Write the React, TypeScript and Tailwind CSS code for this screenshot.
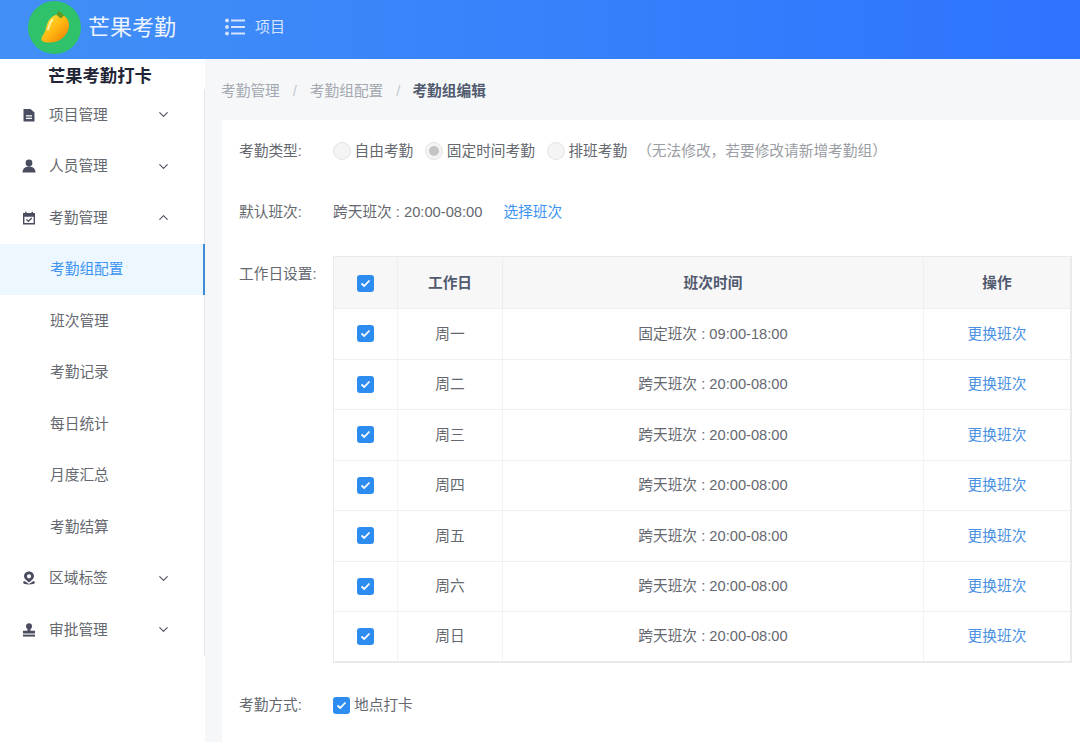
import React from "react";
import { ChevronDown, ChevronUp } from "lucide-react";

const days = ["周一", "周二", "周三", "周四", "周五", "周六", "周日"];

function Mango() {
  return (
    <svg width="53" height="53" viewBox="0 0 53 53" className="shrink-0">
      <defs>
        <linearGradient id="mango" x1="0.15" y1="0.2" x2="0.85" y2="0.9">
          <stop offset="0" stopColor="#ffdb2a" />
          <stop offset="0.5" stopColor="#ffb512" />
          <stop offset="1" stopColor="#f38606" />
        </linearGradient>
      </defs>
      <circle cx="26.5" cy="26.5" r="26.5" fill="#2fc26b" />
      <path
        d="M27.5 14 C33.5 11.5 41 16 41 24 C41 32.5 33.5 40.5 24.5 41.3 C19.5 41.8 13 41.8 13.5 37.5 C13.9 34.5 16.5 33 17.5 29 C18.5 24 20.5 16.5 27.5 14 Z"
        fill="url(#mango)"
      />
      <path d="M28.5 14 L30.5 9.5 L33 11.5 L36 14.5 L33 17.5 Z" fill="#5f9a24" />
      <path d="M24.5 18.5 C22 21 21.3 25 20 28.5" stroke="#fff0a0" strokeWidth="2" strokeLinecap="round" fill="none" />
    </svg>
  );
}

function ListIcon() {
  return (
    <svg width="20" height="18" viewBox="0 0 20 18" fill="none" className="shrink-0">
      <circle cx="2" cy="2.5" r="1.9" fill="#d5e4fd" />
      <circle cx="2" cy="9" r="1.9" fill="#d5e4fd" />
      <circle cx="2" cy="15.5" r="1.9" fill="#d5e4fd" />
      <path d="M6 2.5H20M6 9H20M6 15.5H20" stroke="#d5e4fd" strokeWidth="1.8" />
    </svg>
  );
}

function FileIcon() {
  return (
    <svg width="14" height="14" viewBox="0 0 14 14">
      <path fillRule="evenodd" d="M1.5 1H8.5L12.5 4.5V13.5H1.5ZM4 7.3V8.4H10V7.3ZM4 9.8V10.9H10V9.8Z" fill="#4a4d60" />
    </svg>
  );
}

function UserIcon() {
  return (
    <svg width="14" height="14" viewBox="0 0 14 14" fill="#4a4d60">
      <circle cx="7" cy="4" r="3.4" />
      <path d="M0.5 13.5C0.5 9.5 3.5 7.5 7 7.5C10.5 7.5 13.5 9.5 13.5 13.5Z" />
    </svg>
  );
}

function CalendarIcon() {
  return (
    <svg width="14" height="14" viewBox="0 0 14 14">
      <path fillRule="evenodd" d="M1 2H3V0.8H4.5V2H9.5V0.8H11V2H13V13.5H1ZM2.4 5.8V12.1H11.6V5.8Z" fill="#4a4d60" />
      <path d="M4.4 8.4L6.3 10.3L9.8 7" stroke="#4a4d60" strokeWidth="1.3" fill="none" />
    </svg>
  );
}

function PinIcon() {
  return (
    <svg width="14" height="14" viewBox="0 0 14 14">
      <path fillRule="evenodd" d="M7 0.5C10 0.5 12 2.7 12 5.2C12 7.4 9.5 9.6 7 11.5C4.5 9.6 2 7.4 2 5.2C2 2.7 4 0.5 7 0.5ZM7 3.2A2.1 2.1 0 1 0 7 7.4A2.1 2.1 0 1 0 7 3.2Z" fill="#4a4d60" />
      <path d="M2.5 10C1.4 10.5 1 11 1 11.5C1 12.8 3.5 13.5 7 13.5C10.5 13.5 13 12.8 13 11.5C13 11 12.6 10.5 11.5 10L7 13Z" fill="#4a4d60" />
    </svg>
  );
}

function StampIcon() {
  return (
    <svg width="14" height="14" viewBox="0 0 14 14" fill="#4a4d60">
      <circle cx="7" cy="3.3" r="3" />
      <path d="M5.5 5.5H8.5V7.8H13V10.5H1V7.8H5.5Z" />
      <rect x="1" y="11.6" width="12" height="2" />
    </svg>
  );
}

function Check() {
  return (
    <span className="w-[17px] h-[17px] rounded-[3px] bg-[#2d8cf0] flex items-center justify-center shrink-0">
      <svg width="11" height="9" viewBox="0 0 11 9" fill="none">
        <path d="M1.5 4.5L4.2 7L9.5 1.5" stroke="white" strokeWidth="1.8" />
      </svg>
    </span>
  );
}

function Radio({ label, checked }: { label: string; checked?: boolean }) {
  return (
    <span className="flex items-center">
      <span className="w-[18px] h-[18px] rounded-full bg-[#f4f4f4] border border-[#e4e4e4] flex items-center justify-center shrink-0">
        {checked && <span className="w-[10px] h-[10px] rounded-full bg-[#c4c4c4]" />}
      </span>
      <span className="ml-[3.5px]">{label}</span>
    </span>
  );
}

function MenuRow({ icon, label, open }: { icon: React.ReactNode; label: string; open?: boolean }) {
  return (
    <div className="h-[51.5px] flex items-center pl-[22px] pr-[33px] text-[#65686f]">
      <span className="w-[27px] flex items-center">{icon}</span>
      <span className="flex-1">{label}</span>
      {open ? (
        <ChevronUp size={15} strokeWidth={1.8} className="text-[#4e5162]" />
      ) : (
        <ChevronDown size={15} strokeWidth={1.8} className="text-[#4e5162]" />
      )}
    </div>
  );
}

function SubRow({ label, active }: { label: string; active?: boolean }) {
  return (
    <div
      className={
        active
          ? "h-[51.5px] flex items-center pl-[50px] -mr-px bg-[#edf7ff] text-[#3d94f2] border-r-2 border-[#3b8bd6]"
          : "h-[51.5px] flex items-center pl-[50px] text-[#65686f]"
      }
    >
      {label}
    </div>
  );
}

export default function App() {
  return (
    <div
      className="w-[1080px] h-[742px] overflow-hidden flex flex-col bg-white text-[14.7px]"
      style={{ fontFamily: '"Liberation Sans", "Noto Sans CJK SC", sans-serif' }}
    >
      {/* Top bar */}
      <header className="h-[59px] shrink-0 flex items-center pl-[28px] pb-[5px] bg-gradient-to-r from-[#428ff6] to-[#2e73ff]">
        <Mango />
        <span className="ml-[7px] text-[22px] text-[#eef4ff]">芒果考勤</span>
        <span className="ml-[49px]"><ListIcon /></span>
        <span className="ml-[10px] text-[15px] text-[#d5e4fd]">项目</span>
      </header>

      <div className="flex-1 flex min-h-0">
        {/* Sidebar */}
        <aside className="w-[205px] shrink-0 bg-white">
          <div className="h-[30px] flex items-center pl-[48px] pt-[5px] text-[17.3px] font-bold text-[#1f2537]">
            芒果考勤打卡
          </div>
          <nav className="border-r border-[#e4e7ed]">
            <MenuRow icon={<FileIcon />} label="项目管理" />
            <MenuRow icon={<UserIcon />} label="人员管理" />
            <MenuRow icon={<CalendarIcon />} label="考勤管理" open />
            <SubRow label="考勤组配置" active />
            <SubRow label="班次管理" />
            <SubRow label="考勤记录" />
            <SubRow label="每日统计" />
            <SubRow label="月度汇总" />
            <SubRow label="考勤结算" />
            <MenuRow icon={<PinIcon />} label="区域标签" />
            <MenuRow icon={<StampIcon />} label="审批管理" />
          </nav>
        </aside>

        {/* Main */}
        <main className="flex-1 min-w-0 bg-[#f5f7f9]">
          <div className="h-[61px] flex items-center pl-[16px] pt-[3px] text-[#a4a8b0]">
            <span>考勤管理</span>
            <span className="mx-[13px] text-[#c5c8ce]">/</span>
            <span>考勤组配置</span>
            <span className="ml-[13px] mr-[12px] text-[#c5c8ce]">/</span>
            <span className="font-bold text-[#515a6e]">考勤组编辑</span>
          </div>

          <div className="bg-white h-full ml-[17px] pt-[15px] pl-[17px] pr-[8px] text-[#65686f]">
            <div className="flex items-center h-[32px] mb-[29px]">
              <span className="w-[94px] shrink-0">考勤类型:</span>
              <div className="flex items-center gap-[12px]">
                <Radio label="自由考勤" />
                <Radio label="固定时间考勤" checked />
                <Radio label="排班考勤" />
              </div>
              <span className="ml-[10px] text-[#9a9da3]">（无法修改，若要修改请新增考勤组）</span>
            </div>

            <div className="flex items-center h-[32px] mb-[28px]">
              <span className="w-[94px] shrink-0">默认班次:</span>
              <span>跨天班次 : 20:00-08:00</span>
              <span className="ml-[21px] text-[#3d94f2]">选择班次</span>
            </div>

            <div className="flex items-start mb-[26.5px]">
              <span className="w-[94px] shrink-0 pt-[7px]">工作日设置:</span>
              <div className="flex-1 border border-[#e8eaec] border-r-2 border-b-2">
                <div className="grid grid-cols-[64px_105px_421px_1fr] h-[52px] pt-px bg-[#f7f7f8] border-b border-[#eceef0] font-bold text-[#515a6e]">
                  <div className="flex items-center justify-center border-r border-[#eceef0]"><Check /></div>
                  <div className="flex items-center justify-center border-r border-[#eceef0]">工作日</div>
                  <div className="flex items-center justify-center border-r border-[#eceef0]">班次时间</div>
                  <div className="flex items-center justify-center">操作</div>
                </div>
                {days.map((day, i) => (
                  <div
                    key={day}
                    className={
                      i === days.length - 1
                        ? "grid grid-cols-[64px_105px_421px_1fr] h-[49px]"
                        : "grid grid-cols-[64px_105px_421px_1fr] h-[50.5px] border-b border-[#eff0f2]"
                    }
                  >
                    <div className="flex items-center justify-center border-r border-[#f2f3f5]"><Check /></div>
                    <div className="flex items-center justify-center border-r border-[#f2f3f5]">{day}</div>
                    <div className="flex items-center justify-center border-r border-[#f2f3f5]">
                      {i === 0 ? "固定班次 : 09:00-18:00" : "跨天班次 : 20:00-08:00"}
                    </div>
                    <div className="flex items-center justify-center text-[#4a90e2]">更换班次</div>
                  </div>
                ))}
              </div>
            </div>

            <div className="flex items-center h-[32px]">
              <span className="w-[94px] shrink-0">考勤方式:</span>
              <Check />
              <span className="ml-[4px]">地点打卡</span>
            </div>
          </div>
        </main>
      </div>
    </div>
  );
}
